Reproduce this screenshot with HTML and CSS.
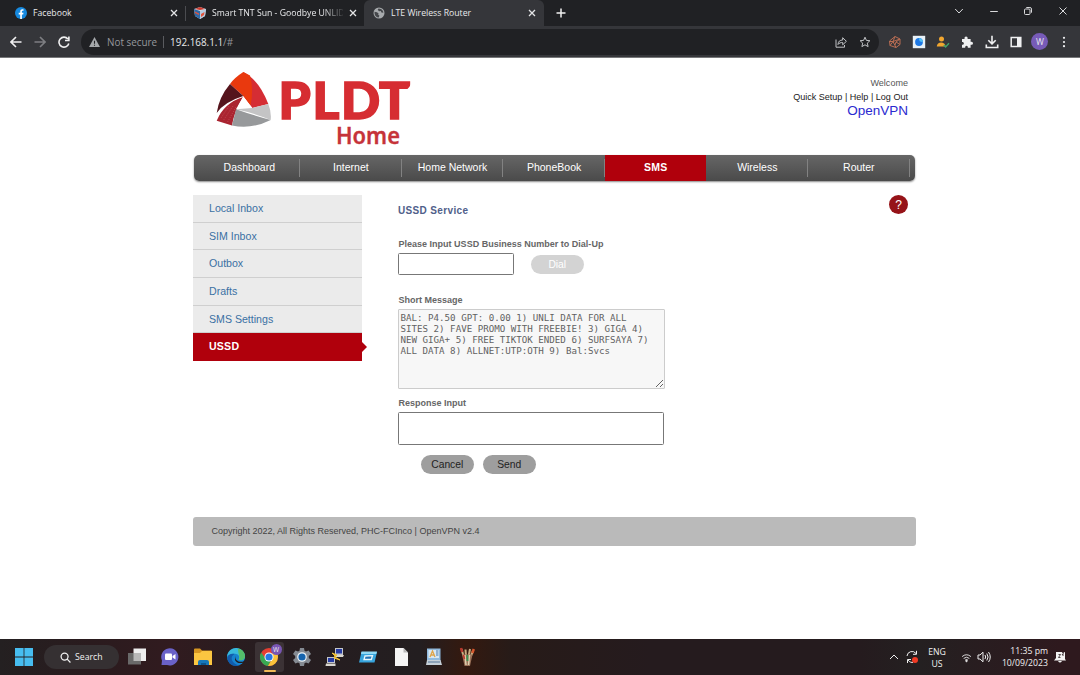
FILE: index.html
```html
<!doctype html>
<html lang="en">
  <head>
    <meta charset="UTF-8" />
    <title>LTE Wireless Router</title>
    <link rel="stylesheet" href="styles.css">
  </head>
  <body>
    <header class="browser">
      <div class="tabs">
        <div class="tab">
          <svg class="favicon" viewBox="0 0 12 12"><circle cx="6" cy="6" r="6" fill="#1689df" /><path d="M5.2 12V7.4H3.7V5.7h1.5V4.5c0-1.6.9-2.3 2.2-2.3l1.1.1v1.5h-.7c-.7 0-.9.3-.9.9v1h1.6l-.3 1.7H6.9V12z" fill="#fff" /></svg>
          <span class="tab-title">Facebook</span>
          <svg class="close" viewBox="0 0 8 8"><path d="m1 1 6 6M7 1 1 7" /></svg>
        </div>
        <div class="tab tab-second">
          <svg class="favicon" viewBox="0 0 12 12"><path d="m0 2 6-2 6 2-1 7-5 3-5-3z" fill="#d6dce5" /><path d="m0 2 6 2v8L1 9z" fill="#2e69a6" /><path d="m6 4 6-2-1 7-5 3z" fill="#b7cbe0" /><path d="m1 2 5-2 5 2-5 1z" fill="#cc392d" /><path d="m1 4.500 4 2v1.500l-4-2zM7 7l3.500-2-.5 3-3 2z" fill="#e2533b" /></svg>
          <span class="tab-title">Smart TNT Sun - Goodbye UNLID</span>
          <svg class="close" viewBox="0 0 8 8"><path d="m1 1 6 6M7 1 1 7" /></svg>
        </div>
        <div class="tab active">
          <svg class="favicon" viewBox="0 0 12 12"><circle cx="6" cy="6" r="5.5" fill="#a7aaad" /><path d="M1.500 4.800 4 5.200l1.600 1.300-.4 1.300 1.200.8-.6 2-1.800-.4C2.300 9.300 1.300 7.500 1.500 4.800zM5.500 1.500l-.8 1.300L6 4.200l1.800-.2.6 1.500 2 .3C10.300 3.800 9 2.200 7 1.700z" fill="#45474b" /></svg>
          <span class="tab-title">LTE Wireless Router</span>
          <svg class="close" viewBox="0 0 8 8"><path d="m1 1 6 6M7 1 1 7" /></svg>
        </div>
        <svg class="new-tab" viewBox="0 0 10 10"><path d="M5 .5v9M.5 5h9" /></svg>
        <div class="window-controls">
          <svg viewBox="0 0 10 10"><path d="m1.200 3 3.800 4 3.800-4" /></svg>
          <svg viewBox="0 0 10 10"><path d="M1.200 5.500h7.600" /></svg>
          <svg viewBox="0 0 10 10"><rect x="1.500" y="3" width="5.500" height="5.500" rx="1" /><path d="M3.300 1.500h3.600q1.600 0 1.600 1.600v3.600" /></svg>
          <svg viewBox="0 0 10 10"><path d="m1.500 1.500 7 7m0-7-7 7" /></svg>
        </div>
      </div>
      <div class="toolbar">
        <div class="nav-buttons">
          <svg viewBox="0 0 12 12"><path d="M11.500 6H1.200M6 1 1 6l5 5" /></svg>
          <svg class="dim" viewBox="0 0 12 12"><path d="M.5 6h10.300M6 1l5 5-5 5" /></svg>
          <svg viewBox="0 0 12 12"><path d="M9.900 3A5 5 0 1 0 10.800 7.500M10.900.500v4H7" /></svg>
        </div>
        <div class="omnibox">
          <svg class="warning" viewBox="0 0 12 11"><path d="M6 0 12 11H0z" fill="#a5a8ab" /><path d="M6 4v3.500M6 8.500v1.200" stroke="#202124" stroke-width="1.200" /></svg>
          <span class="not-secure">Not secure</span>
          <span class="split"></span>
          <span class="url">192.168.1.1<i>/#</i></span>
          <div class="omnibox-icons">
            <svg viewBox="0 0 12 12"><path d="M1 3.500v7.700h8.500V9M3 8.500c.2-3.200 2-4.500 4.700-4.500V1.700l3.700 3.600-3.700 3.500V6.500C5.700 6.500 4 7 3 8.500z" /></svg>
            <svg viewBox="0 0 12 12"><path d="m6 1.200 1.400 3.200 3.500.3-2.600 2.400.8 3.500L6 8.800l-3.100 1.800.8-3.500L1.100 4.700l3.500-.3z" /></svg>
          </div>
        </div>
        <div class="extensions">
          <svg viewBox="0 0 14 14"><g fill="none" stroke="#b96d53" stroke-width="1"><path d="M7 1.500 12 4v5.500L8 12.500 2 10.500 1.500 6z" /><path d="m7 1.500-2 5 3 6M12 4 5 6.500H1.500M5 6.500l-3 4M12 9.500 8 7l4-3M8 7l-1 3" /></g></svg>
          <svg viewBox="0 0 14 14"><path d="M.800.800h12.400v12.400H.800z" fill="#e8f1f7" /><circle cx="7" cy="7" r="3.900" fill="#1d78e5" /><path d="M7 3.200A3.800 3.800 0 0 1 10.800 7C8 7 7 6 7 3.200z" fill="#53c1f3" /></svg>
          <svg viewBox="0 0 14 14"><circle cx="5.500" cy="4" r="2.500" fill="#f1a62f" /><path d="M.8 11.500c0-5.500 8.500-5.500 8.800 0z" fill="#f1a62f" /><path d="m7.800 10 1.800 2L13 8.200" fill="none" stroke="#3fa66d" stroke-width="1.300" /></svg>
          <svg viewBox="0 0 14 14"><path d="M2 4h2.600c-.8-3.300 3.700-3.300 3 0h3v2.800c3.200-.7 3.200 3.600 0 3v3H7.800c.5-2.700-3-2.700-2.600 0H2V9.700c2.500.2 2.500-3 0-2.800z" fill="#eff0f1" /></svg>
          <svg viewBox="0 0 14 14"><path d="M7 .800v7.700M3.300 5.200 7 8.900l3.700-3.700M1.300 9.500v3h11.400v-3" fill="none" stroke="#eff0f1" stroke-width="1.600" /></svg>
          <svg viewBox="0 0 14 14"><path d="M2.200 2.500h9.600v9H2.200z" fill="none" stroke="#eff0f1" stroke-width="1.500" /><path d="M8 2h4v10H8z" fill="#eff0f1" /></svg>
          <span class="profile">W</span>
          <svg viewBox="0 0 14 14"><g fill="#eff0f1"><circle cx="7" cy="2.800" r="1.100" /><circle cx="7" cy="7" r="1.100" /><circle cx="7" cy="11.200" r="1.100" /></g></svg>
        </div>
      </div>
    </header>

    <main class="page">
      <div class="masthead">
        <svg class="logo" viewBox="0 0 198 78">
          <path d="M29.300 2Q45 10 54.300 34l-16 4-9-12z" fill="#d52d34" />
          <path d="M29.300 2Q20 8 16 14l13.300 12 7.200 9.500Q40 20 36 5.500z" fill="#e9390e" />
          <path d="M16 14Q5 27 2.700 43 10 32 29.300 26z" fill="#55141c" />
          <path d="M29 27Q10 33 2.700 50.700L18 55.500Q20 42 29 27z" fill="#aa2430" />
          <path d="M29.300 26.500 22 39.300l16.300-1.300z" fill="#fff" />
          <path d="M22 39.300 38.300 38l16-4q3.300 8 2.400 16Q40 43 22 39.300z" fill="#c4c4c5" />
          <path d="M22 39.300Q38 45 56.700 50 38 59.500 18 55.500z" fill="#97999b" />
          <g class="logo-dots"><path d="m15 36-8 12M19 36 9 51M22 37l-9 16" /></g>
          <text class="logo-name" x="64.500 98.500 127 165" y="49.300">PLDT</text>
          <path d="M198 11q-1.500 7-8 10.500h9z" fill="#fff" />
          <text class="logo-home" x="122" y="74" textLength="64" lengthAdjust="spacingAndGlyphs">Home</text>
        </svg>
        <div class="account">
          <p class="welcome">Welcome</p>
          <p><a>Quick Setup</a> | <a>Help</a> | <a>Log Out</a></p>
          <p class="vpn">OpenVPN</p>
        </div>
      </div>

      <nav class="menu">
        <a>Dashboard</a>
        <a>Internet</a>
        <a>Home Network</a>
        <a>PhoneBook</a>
        <a class="current">SMS</a>
        <a>Wireless</a>
        <a>Router</a>
      </nav>

      <div class="columns">
        <aside class="sidebar">
          <a>Local Inbox</a>
          <a>SIM Inbox</a>
          <a>Outbox</a>
          <a>Drafts</a>
          <a>SMS Settings</a>
          <a class="current">USSD</a>
        </aside>
        <section class="content">
          <div class="content-head">
            <h1>USSD Service</h1>
            <span class="help">?</span>
          </div>
          <label for="number">Please Input USSD Business Number to Dial-Up</label>
          <div class="dial-row">
            <input id="number" type="text" />
            <button class="btn" disabled>Dial</button>
          </div>
          <label for="message">Short Message</label>
          <textarea id="message" readonly spellcheck="false">BAL: P4.50 GPT: 0.00 1) UNLI DATA FOR ALL
SITES 2) FAVE PROMO WITH FREEBIE! 3) GIGA 4)
NEW GIGA+ 5) FREE TIKTOK ENDED 6) SURFSAYA 7)
ALL DATA 8) ALLNET:UTP:OTH 9) Bal:Svcs</textarea>
          <label for="response">Response Input</label>
          <input id="response" type="text" />
          <div class="actions">
            <button class="btn">Cancel</button>
            <button class="btn">Send</button>
          </div>
        </section>
      </div>

      <footer class="footer">Copyright 2022, All Rights Reserved, PHC-FCInco | OpenVPN v2.4</footer>
    </main>

    <div class="taskbar">
      <svg class="start" viewBox="0 0 18 18"><path d="M0 0h8.600v8.600H0zM9.400 0H18v8.600H9.400zM0 9.400h8.600V18H0zM9.400 9.400H18V18H9.400z" fill="#47bdf0" /></svg>
      <div class="search">
        <svg viewBox="0 0 12 12"><circle cx="5" cy="5" r="3.800" /><path d="m7.800 7.800 3.600 3.600" /></svg>
        <span>Search</span>
      </div>
      <div class="apps">
        <div class="app"><svg viewBox="0 0 20 20"><path d="M6.500 1.500H19V14H6.500z" fill="#efefef" /><path d="M1 6h13v11.500H1z" fill="#696969" /><path d="M6.500 6H14v8H6.500z" fill="#b8b8b8" /></svg></div>
        <div class="app"><svg viewBox="0 0 20 20"><path d="M1.500 18 2 13.500A8.600 8.600 0 1 1 7 18z" fill="#6a62c8" /><rect x="5" y="6.500" width="7" height="6.500" rx="1" fill="#fff" /><path d="m12.500 9 3-2v5.500l-3-2z" fill="#fff" /></svg></div>
        <div class="app"><svg viewBox="0 0 20 20"><path d="M1 2.500q0-1 1-1h5l2 2h9q1 0 1 1V18H1z" fill="#d69621" /><path d="M1 6h6l2-2h10v14H1z" fill="#fbc641" /><path d="M5 18v-3q0-2 2-2h7q2 0 2 2v3z" fill="#1778b9" /><path d="M8 16h5v2H8z" fill="#0d568e" /></svg></div>
        <div class="app"><svg viewBox="0 0 20 20"><circle cx="10" cy="10" r="9" fill="#1683cf" /><path d="M1.300 8A9 9 0 0 1 19 9c0 5-5 5-6.500 3.500 2-3-.500-6-4-5.700C5 6.500 3 8 1.300 11z" fill="#38b9dc" /><path d="M12 1.400c5 .600 7 4.600 7 7.600 0 4-4.200 5-6.200 3.800C14.500 9.500 12 7 12 1.400z" fill="#54bd6a" /><path d="M8.500 7C3 10 6 17 13 18.500 5 21 1 14 1.200 10 2 8 5 6 8.500 7z" fill="#125cac" /><path d="M10 9q-2 3.500 2.500 5.400 3 .900 6.300-.5l-.8 1.600Q11 17.500 9 13q-.500-2 1-4z" fill="#211d1f" /></svg></div>
        <div class="app running"><svg viewBox="0 0 20 20"><circle cx="10" cy="10" r="9" fill="#e43e32" /><path d="M2.200 5.500A9 9 0 0 0 9 19l4.500-8H6z" fill="#38a852" /><path d="M19 10a9 9 0 0 1-10 9l5-8.500-1-4.500h5.300q.700 2 .700 4z" fill="#fac33b" /><circle cx="10" cy="10" r="4.500" fill="#fff" /><circle cx="10" cy="10" r="3.600" fill="#2779e4" /></svg><span class="badge">W</span></div>
        <div class="app"><svg viewBox="0 0 20 20"><path d="m8 1h4l.5 2.800 1.500.8 2.600-1L19 7l-2.200 2v2l2.200 2-2.400 3.500-2.600-1-1.500.8L12 19H8l-.5-2.700-1.500-.8-2.600 1L1 13l2.200-2V9L1 7l2.400-3.400 2.600 1 1.500-.8z" fill="#858b93" /><circle cx="10" cy="10" r="4.800" fill="#ecf3f8" /><circle cx="10" cy="10" r="3.600" fill="#1664ad" /></svg></div>
        <div class="app"><svg viewBox="0 0 20 20"><path d="M10 1h8v7h-8zM2 10h8v6H2z" fill="#c3c6cb" /><path d="M11 2h6v4.500h-6zM3 11h6v4H3z" fill="#263ca5" /><path d="M11 8h8l-1 2h-7zM1 16.500h9.500V19H.500z" fill="#d9d7d0" /><path d="m7 6 5 2-2 2 5 3-6-2 1-2z" fill="#efc038" stroke="#efc038" /></svg></div>
        <div class="app"><svg viewBox="0 0 20 20"><path d="M3.500 5H19l-2.500 10.500H1z" fill="#37a4dc" /><path d="M3.500 4.500H19L18.300 7H3z" fill="#8fd9f5" /><path d="m7 9 7.500-.300-1.200 3.800H6z" fill="#2072b5" stroke="#eaf8fc" stroke-width="1.300" /></svg></div>
        <div class="app"><svg viewBox="0 0 20 20"><path d="M4 1h8.500L17 5.500V19H4z" fill="#f5f5f5" /><path d="M12.500 1v4.500H17z" fill="#b9b9b9" /></svg></div>
        <div class="app"><svg viewBox="0 0 20 20"><path d="M3 1.500h13.500V14H3z" fill="#91bbdf" /><path d="M4.500 3H15v8H4.500z" fill="#d6e7f3" /><path d="m6 10 2.500-6L11 10M7 8h3" stroke="#dfa449" fill="none" stroke-width="1.300" /><path d="M12 4h2.500M12 6h2.500M12 8h2.500" stroke="#4778ae" /><path d="M3 13h13.500l1.500 5H2z" fill="#c6d0d8" /><path d="M4 15h12" stroke="#547596" /></svg></div>
        <div class="app"><svg viewBox="0 0 20 20"><path d="m6.500 9-2-7M9 10 8.500 2.500M11.500 10l1.500-8M13.500 10l2.500-6" stroke="#c9ad80" stroke-width="2" /><path d="m4 1 1.200 4" stroke="#b8382d" stroke-width="2.500" /><path d="m16.800 2-1.500 4" stroke="#d5572d" stroke-width="2.500" /><path d="M5 7.500h10.500L13 19H7.500z" fill="#9b7158" /><path d="m8 8 1 10M12.500 8l-1 10" stroke="#ddd0af" stroke-width="1.500" /><path d="m10.300 8 .2 6" stroke="#3c9451" stroke-width="1.800" /><path d="m6.500 8 1 4" stroke="#c4372b" stroke-width="1.500" /></svg></div>
      </div>
      <div class="tray">
        <svg class="chevron" viewBox="0 0 10 10"><path d="m1 7 4-4 4 4" /></svg>
        <svg class="sync" viewBox="0 0 14 14"><path d="M2 6a5 5 0 0 1 9-2.500M11.500.800v3.500H8M2.500 13V9.500H6M3 10c1.500 2.500 4 2.500 5 2.400" /><circle cx="10" cy="10" r="3" fill="#f03a24" stroke="none" /></svg>
        <span class="lang">ENG<br />US</span>
        <svg class="wifi" viewBox="0 0 12 12"><path d="M1.200 5q4.800-4 9.600 0M2.900 7q3.100-2.600 6.200 0M4.500 8.800q1.500-1.200 3 0" /><circle cx="6" cy="9.800" r=".8" fill="#eee" /></svg>
        <svg class="volume" viewBox="0 0 14 12"><path d="M1 4h2l3-2.800v9.600L3 8H1zM8 4q1.400 2 0 4M9.800 2.500q2.500 3.500 0 7M11.500 1q3.500 5 0 10" /></svg>
        <span class="clock">11:35 pm<br />10/09/2023</span>
        <svg class="bell" viewBox="0 0 12 12"><path d="M2 1h9v7l1 1.500H0L2 7zM4 10h4q-2 3-4 0z" fill="#f2f2f2" /><path d="M4.500 3.500h2l-2 3h2M8 1.500h2l-2 2.500h2" fill="none" stroke="#2a1c1f" stroke-width=".8" /></svg>
      </div>
    </div>
  </body>
</html>
```
FILE: styles.css
```css
* {
  box-sizing: border-box;
}
body {
  margin: 0;
  width: 1080px;
  height: 675px;
  overflow: hidden;
  display: flex;
  flex-direction: column;
  background: #fff;
  font-family: "Liberation Sans", Arial, sans-serif;
}
svg {
  display: block;
  flex: none;
}
p,
h1 {
  margin: 0;
}

/* browser chrome */
.browser {
  height: 58px;
  flex: none;
  background: #35363a;
  border-bottom: 1px solid #77787a;
  color: #e9eaec;
  font-family: "Open Sans", "Noto Sans", sans-serif;
}
.tabs {
  height: 26px;
  display: flex;
  align-items: center;
  background: #202124;
}
.tab {
  width: 185px;
  height: 26px;
  padding: 0 7px 0 15px;
  display: flex;
  align-items: center;
  gap: 6px;
  font-size: 8.7px;
  font-weight: 500;
}
.tab-second {
  width: 179px;
  padding: 0 7px 0 8px;
  border-left: 1px solid #4b4c50;
  height: 15px;
}
.tab.active {
  width: 180px;
  padding: 0 8px 0 9px;
  background: #35363a;
  border-radius: 6px 6px 0 0;
}
.favicon {
  width: 12px;
  height: 12px;
}
.tab-title {
  flex: 1;
  white-space: nowrap;
  line-height: 14px;
}
.tab-second .tab-title {
  width: 131px;
  mask-image: linear-gradient(90deg, #000 110px, transparent 134px);
}
.close {
  width: 8px;
  height: 8px;
  fill: none;
  stroke: #e4e5e7;
  stroke-width: 1.3;
}
.new-tab {
  width: 10px;
  height: 10px;
  margin-left: 12px;
  stroke: #f1f1f1;
  stroke-width: 1.5;
}
.window-controls {
  margin: -5px 12px 0 auto;
  display: flex;
  gap: 24.6px;
}
.window-controls svg {
  width: 10px;
  height: 10px;
  fill: none;
  stroke: #d9dadc;
}
.toolbar {
  height: 31px;
  display: flex;
  align-items: center;
  padding: 0 4px 0 10px;
}
.nav-buttons {
  width: 71px;
  display: flex;
  gap: 12px;
}
.nav-buttons svg {
  width: 12px;
  height: 12px;
  fill: none;
  stroke: #f0f0f1;
  stroke-width: 1.6;
}
.nav-buttons .dim {
  stroke: #7d7e82;
}
.omnibox {
  width: 798px;
  height: 26px;
  padding: 0 8px 0 8px;
  display: flex;
  align-items: center;
  border-radius: 13px;
  background: #202124;
  font-size: 9.9px;
}
.warning {
  width: 11px;
  height: 10px;
}
.not-secure {
  margin-left: 7px;
  color: #96989c;
}
.split {
  width: 1px;
  height: 12px;
  margin: 0 6px;
  background: #5a5b5f;
}
.url {
  font-weight: 500;
}
.url i {
  font-style: normal;
  color: #96989c;
}
.omnibox-icons {
  margin-left: auto;
  display: flex;
  gap: 12px;
}
.omnibox-icons svg {
  width: 12px;
  height: 12px;
  fill: none;
  stroke: #c1c3c6;
}
.extensions {
  flex: 1;
  margin-left: 4px;
  display: flex;
  justify-content: space-around;
  align-items: center;
}
.extensions svg {
  width: 14px;
  height: 14px;
}
.profile {
  width: 17px;
  height: 17px;
  margin: 0 -1.5px;
  border-radius: 50%;
  background: #775bb8;
  font-size: 8.5px;
  line-height: 17px;
  text-align: center;
}

/* router page */
.page {
  width: 723px;
  height: 581px;
  flex: none;
  margin-left: 193px;
}
.masthead {
  height: 97px;
  padding: 12px 8px 0 21px;
  display: flex;
  justify-content: space-between;
}
.logo {
  width: 198px;
  height: 78px;
  overflow: visible;
}
.logo-name {
  font: 900 51.5px Lato, sans-serif;
  fill: #d62d32;
  stroke: #d62d32;
  stroke-width: 1.6;
}
.logo-home {
  font: 600 22.5px "Noto Sans", sans-serif;
  fill: #c63339;
  stroke: #c63339;
  stroke-width: 0.3;
}
.logo-dots {
  fill: none;
  stroke: #d9747a;
  stroke-width: 0.6;
  stroke-dasharray: 0.7 1.6;
}
.account {
  padding-top: 7px;
  text-align: right;
  font-size: 9.05px;
  line-height: 13.5px;
  color: #222;
}
.account .welcome {
  color: #555;
}
.account .vpn {
  font-size: 13.5px;
  color: #2a2ad0;
}
.menu {
  width: 721px;
  height: 26px;
  padding: 0 4.8px 0 5px;
  display: flex;
  margin-left: 0.5px;
  border-radius: 5px;
  background: linear-gradient(#666 0, #5b5b5b 40%, #4a4a4a 100%);
  box-shadow: 0 1px 2px #888;
}
.menu a {
  width: 101.6px;
  color: #fff;
  font-size: 10.5px;
  line-height: 25px;
  text-align: center;
  background: linear-gradient(#828282, #828282) right 4px / 1px 18px no-repeat;
}
.menu .current {
  background: #b0000c;
  font-weight: bold;
  letter-spacing: 0.2px;
}
.columns {
  display: flex;
  height: 322px;
  margin-top: 14px;
}
.sidebar {
  width: 169px;
  height: 166px;
  display: flex;
  flex-direction: column;
}
.sidebar a {
  height: 27.7px;
  flex: none;
  padding-left: 16px;
  border-bottom: 1px solid #cfcfcf;
  background: #ebebeb;
  color: #3a70a3;
  font-size: 10.6px;
  line-height: 27.4px;
}
.sidebar .current {
  position: relative;
  border-color: #b0000c;
  background: #b0000c;
  color: #fff;
  font-weight: bold;
  letter-spacing: 0.2px;
}
.sidebar .current::after {
  content: "";
  position: absolute;
  left: 100%;
  top: 9px;
  border: 5px solid transparent;
  border-left-color: #b0000c;
  border-right: 0;
}
.content {
  flex: 1;
  padding: 0 8px 0 36px;
}
.content-head {
  height: 43px;
  display: flex;
  justify-content: space-between;
}
.content h1 {
  margin-top: 9px;
  color: #50608a;
  font-size: 10px;
  line-height: 13px;
  letter-spacing: 0.35px;
}
.help {
  width: 19px;
  height: 19px;
  border-radius: 50%;
  background: #961318;
  color: #fff;
  font-size: 12px;
  line-height: 20px;
  text-align: center;
}
.content label {
  display: block;
  height: 15px;
  margin-left: 0.5px;
  color: #666;
  font-size: 9.02px;
  font-weight: bold;
  line-height: 12px;
}
.content input {
  display: block;
  border: 1px solid #777;
  border-radius: 1.5px;
  background: #fff;
}
#number {
  width: 116px;
  height: 22px;
}
.dial-row {
  height: 41px;
  display: flex;
  gap: 17px;
}
.content textarea {
  display: block;
  width: 267px;
  height: 80px;
  margin: 0 0 8px;
  padding: 1.5px;
  overflow: hidden;
  border: 1px solid #ccc;
  border-radius: 1px;
  background: #f7f7f7;
  color: #626262;
  font: 9.16px/11.3px "DejaVu Sans Mono", monospace;
  white-space: pre;
}
#response {
  width: 266px;
  height: 33px;
}
.actions {
  display: flex;
  gap: 9.5px;
  padding: 10px 0 0 23px;
}
.btn {
  width: 52.5px;
  height: 19px;
  padding: 0;
  border: 0;
  border-radius: 10px;
  background: #9e9e9e;
  color: #222;
  font: 10.3px "Liberation Sans", Arial, sans-serif;
}
.btn:disabled {
  margin-top: 2px;
  background: #d3d3d3;
  color: #fff;
}
.footer {
  height: 29px;
  padding-left: 18.5px;
  border-radius: 3px;
  background: #bababa;
  color: #444;
  font-size: 9px;
  line-height: 29px;
}

/* taskbar */
.taskbar {
  height: 36px;
  flex: none;
  display: flex;
  align-items: center;
  padding: 0 14px 0 15px;
  background: linear-gradient(90deg, #242021 0, #2a1b1e 90px, #311b1f 170px, #271d20 260px, #231e20 420px, #34190f 465px, #271b18 510px, #251b1e 650px, #251b1e 860px, #242021 920px, #2e191e 1060px);
  color: #f1f1f1;
  font-family: "Open Sans", "Noto Sans", sans-serif;
}
.start {
  width: 18px;
  height: 18px;
}
.search {
  width: 75px;
  height: 24px;
  margin-left: 11px;
  padding-left: 16px;
  display: flex;
  align-items: center;
  gap: 4px;
  border-radius: 12px;
  background: #353032;
  font-size: 8.7px;
}
.search svg {
  width: 11px;
  height: 11px;
  fill: none;
  stroke: #f1f1f1;
  stroke-width: 1.4;
}
.apps {
  display: flex;
  margin-left: 1.5px;
}
.app {
  width: 33px;
  height: 30px;
  display: flex;
  align-items: center;
  justify-content: center;
}
.app svg {
  width: 20px;
  height: 20px;
}
.running {
  position: relative;
  width: 29px;
  margin: 0 2px;
  border-radius: 3px;
  background: #3b3235;
}
.running::after {
  content: "";
  position: absolute;
  bottom: 0;
  left: 9px;
  width: 12px;
  height: 2px;
  border-radius: 1px;
  background: #efb957;
}
.badge {
  position: absolute;
  top: 2px;
  right: 2px;
  width: 11px;
  height: 11px;
  border-radius: 50%;
  background: #7956b3;
  font-size: 6.5px;
  line-height: 11px;
  text-align: center;
}
.tray {
  margin-left: auto;
  display: flex;
  align-items: center;
  font-size: 8.7px;
  line-height: 12px;
}
.tray svg {
  fill: none;
  stroke: #eee;
  stroke-width: 1;
}
.tray .chevron {
  width: 10px;
  height: 10px;
  margin-right: 6px;
}
.tray .sync {
  width: 14px;
  height: 14px;
}
.lang {
  width: 22px;
  margin: 1px 13px 0 7px;
  text-align: center;
}
.tray .wifi {
  width: 11px;
  height: 11px;
  margin-right: 5px;
}
.tray .volume {
  width: 14px;
  height: 12px;
}
.clock {
  width: 50px;
  margin: 0 6px 0 7px;
  text-align: right;
}
.tray .bell {
  width: 12px;
  height: 12px;
  stroke: none;
}
```
